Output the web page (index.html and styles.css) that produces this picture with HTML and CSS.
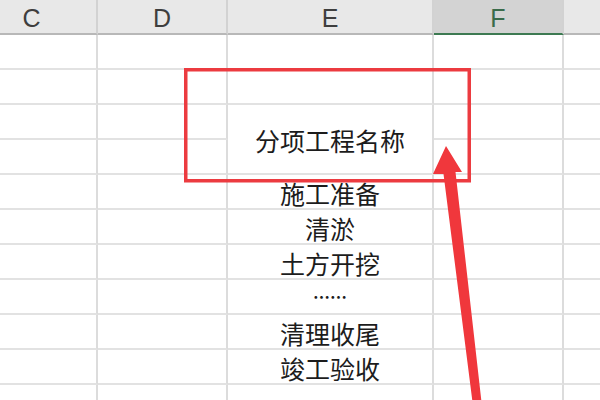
FILE: index.html
```html
<!DOCTYPE html>
<html lang="zh-CN">
<head>
<meta charset="utf-8">
<title>分项工程名称</title>
<link rel="stylesheet" href="styles.css">
</head>
<body>
<div class="page">
  <div class="sheet">
    <div class="hdr col-c">C</div>
    <div class="hdr">D</div>
    <div class="hdr">E</div>
    <div class="hdr sel">F</div>
    <div class="hdr last"></div>

    <div class="cell"></div><div class="cell"></div><div class="cell"></div><div class="cell"></div><div class="cell last"></div>
    <div class="cell"></div><div class="cell"></div><div class="cell"></div><div class="cell"></div><div class="cell last"></div>

    <div class="cell"></div><div class="cell"></div><div class="cell txt merged">分项工程名称</div><div class="cell"></div><div class="cell last"></div>
    <div class="cell"></div><div class="cell"></div><div class="cell"></div><div class="cell last"></div>

    <div class="cell"></div><div class="cell"></div><div class="cell txt">施工准备</div><div class="cell"></div><div class="cell last"></div>
    <div class="cell"></div><div class="cell"></div><div class="cell txt">清淤</div><div class="cell"></div><div class="cell last"></div>
    <div class="cell"></div><div class="cell"></div><div class="cell txt">土方开挖</div><div class="cell"></div><div class="cell last"></div>
    <div class="cell"></div><div class="cell"></div><div class="cell txt dots">……</div><div class="cell"></div><div class="cell last"></div>
    <div class="cell"></div><div class="cell"></div><div class="cell txt">清理收尾</div><div class="cell"></div><div class="cell last"></div>
    <div class="cell"></div><div class="cell"></div><div class="cell txt">竣工验收</div><div class="cell"></div><div class="cell last"></div>
    <div class="cell"></div><div class="cell"></div><div class="cell"></div><div class="cell"></div><div class="cell last"></div>
  </div>

  <svg class="overlay" width="600" height="400" viewBox="0 0 600 400" aria-hidden="true">
    <rect x="185.75" y="69.75" width="283.5" height="111" fill="none" stroke="#ec3b40" stroke-width="3.5"/>
    <polygon points="446,146 462,172 455.5,172 481.5,402 472.5,402 443.5,174 433,174" fill="#f0373c"/>
  </svg>
</div>
</body>
</html>
```

FILE: styles.css
```css
html, body {
  margin: 0;
  padding: 0;
  background: #ffffff;
}

.page {
  position: relative;
  width: 600px;
  height: 400px;
  overflow: hidden;
  background: #ffffff;
}

.sheet {
  display: grid;
  grid-template-columns: 98px 130px 206px 130px 1fr;
  grid-auto-rows: 35px;
}

.hdr {
  box-sizing: border-box;
  background: #e8e8e8;
  border-right: 2px solid #d2d2d2;
  border-bottom: 2px solid #b8b8b8;
  display: flex;
  align-items: center;
  justify-content: center;
  padding-top: 3px;
  font-family: "Liberation Sans", Arial, sans-serif;
  font-size: 25px;
  color: #3e3e3e;
}

.hdr.col-c {
  padding-right: 33px;
}

.hdr.sel {
  background: #d3d3d3;
  color: #3a6b4a;
  border-bottom: 2px solid #3d7a52;
}

.hdr.last,
.cell.last {
  border-right: none;
}

.cell {
  box-sizing: border-box;
  border-right: 2px solid #dcdcdc;
  border-bottom: 2px solid #e2e2e2;
  background: #ffffff;
}

.txt {
  display: flex;
  align-items: center;
  justify-content: center;
  padding-top: 3px;
  font-family: "Noto Sans CJK SC", "Noto Sans", sans-serif;
  font-size: 25px;
  line-height: 28px;
  color: #1c1c1c;
  white-space: nowrap;
}

.merged {
  grid-row: span 2;
  padding-top: 2px;
}

.dots {
  padding-top: 0;
  font-size: 17px;
  line-height: 20px;
  font-weight: 700;
}

.overlay {
  position: absolute;
  left: 0;
  top: 0;
  pointer-events: none;
}
```
